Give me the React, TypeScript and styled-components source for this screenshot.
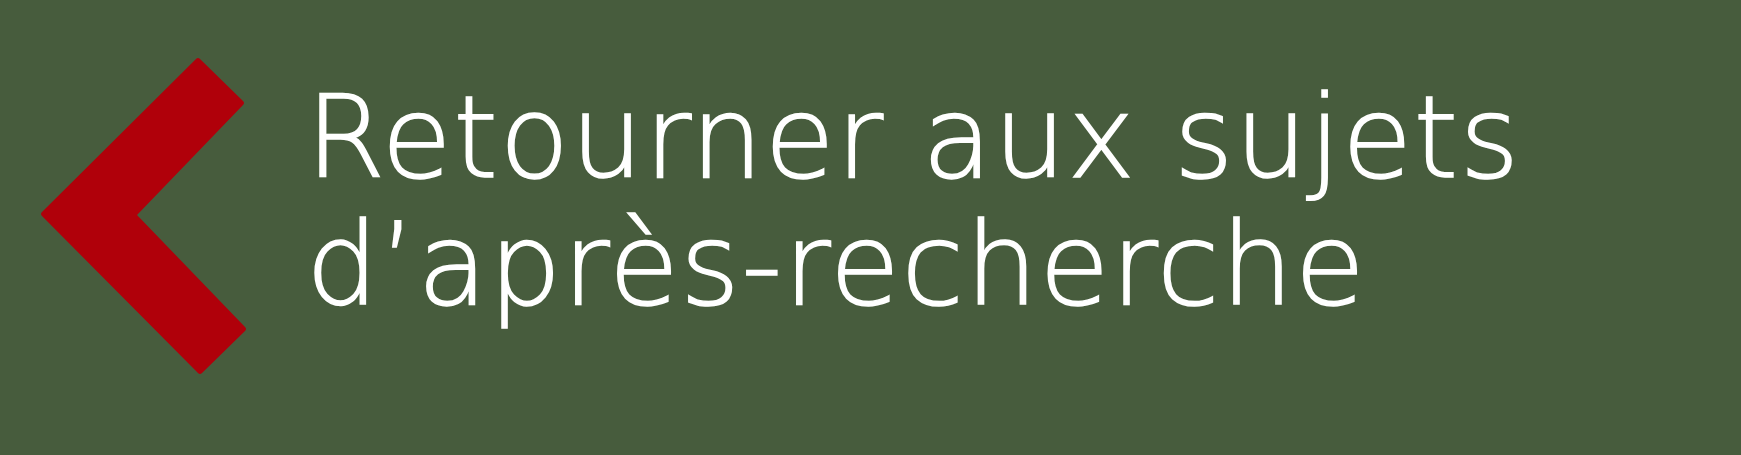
import React from "react";
import styled, { createGlobalStyle } from "styled-components";

const GlobalStyle = createGlobalStyle`
  html, body {
    margin: 0;
    padding: 0;
    background: #475c3d;
  }
`;

const Banner = styled.a`
  display: flex;
  align-items: flex-start;
  width: 1741px;
  height: 455px;
  background: #475c3d;
  text-decoration: none;
  overflow: hidden;
`;

const Arrow = styled.svg`
  flex-shrink: 0;
  width: 300px;
  height: 455px;
`;

const Label = styled.span`
  display: block;
  padding-top: 74px;
  margin-left: 6px;
  color: #ffffff;
  font-family: "DejaVu Sans", "Open Sans", sans-serif;
  font-weight: 200;
  font-size: 114px;
  line-height: 127px;
  letter-spacing: 1.5px;
  -webkit-text-stroke: 1.5px #ffffff;
`;

const BackArrow = () => (
  <Arrow viewBox="0 0 300 455" aria-hidden="true">
    <path
      d="M196 59 Q198 57 200 59 L243 101 Q245 103 243 105 L137 215 L245 327 Q247 329 245 331 L202 373 Q200 375 198 373 L42 216 Q40 214 42 212 Z"
      fill="#b0000a"
    />
  </Arrow>
);

const App = (): JSX.Element => {
  return (
    <>
      <GlobalStyle />
      <Banner href="#">
        <BackArrow />
        <Label>
          Retourner aux sujets
          <br />
          d’après-recherche
        </Label>
      </Banner>
    </>
  );
};

export default App;
